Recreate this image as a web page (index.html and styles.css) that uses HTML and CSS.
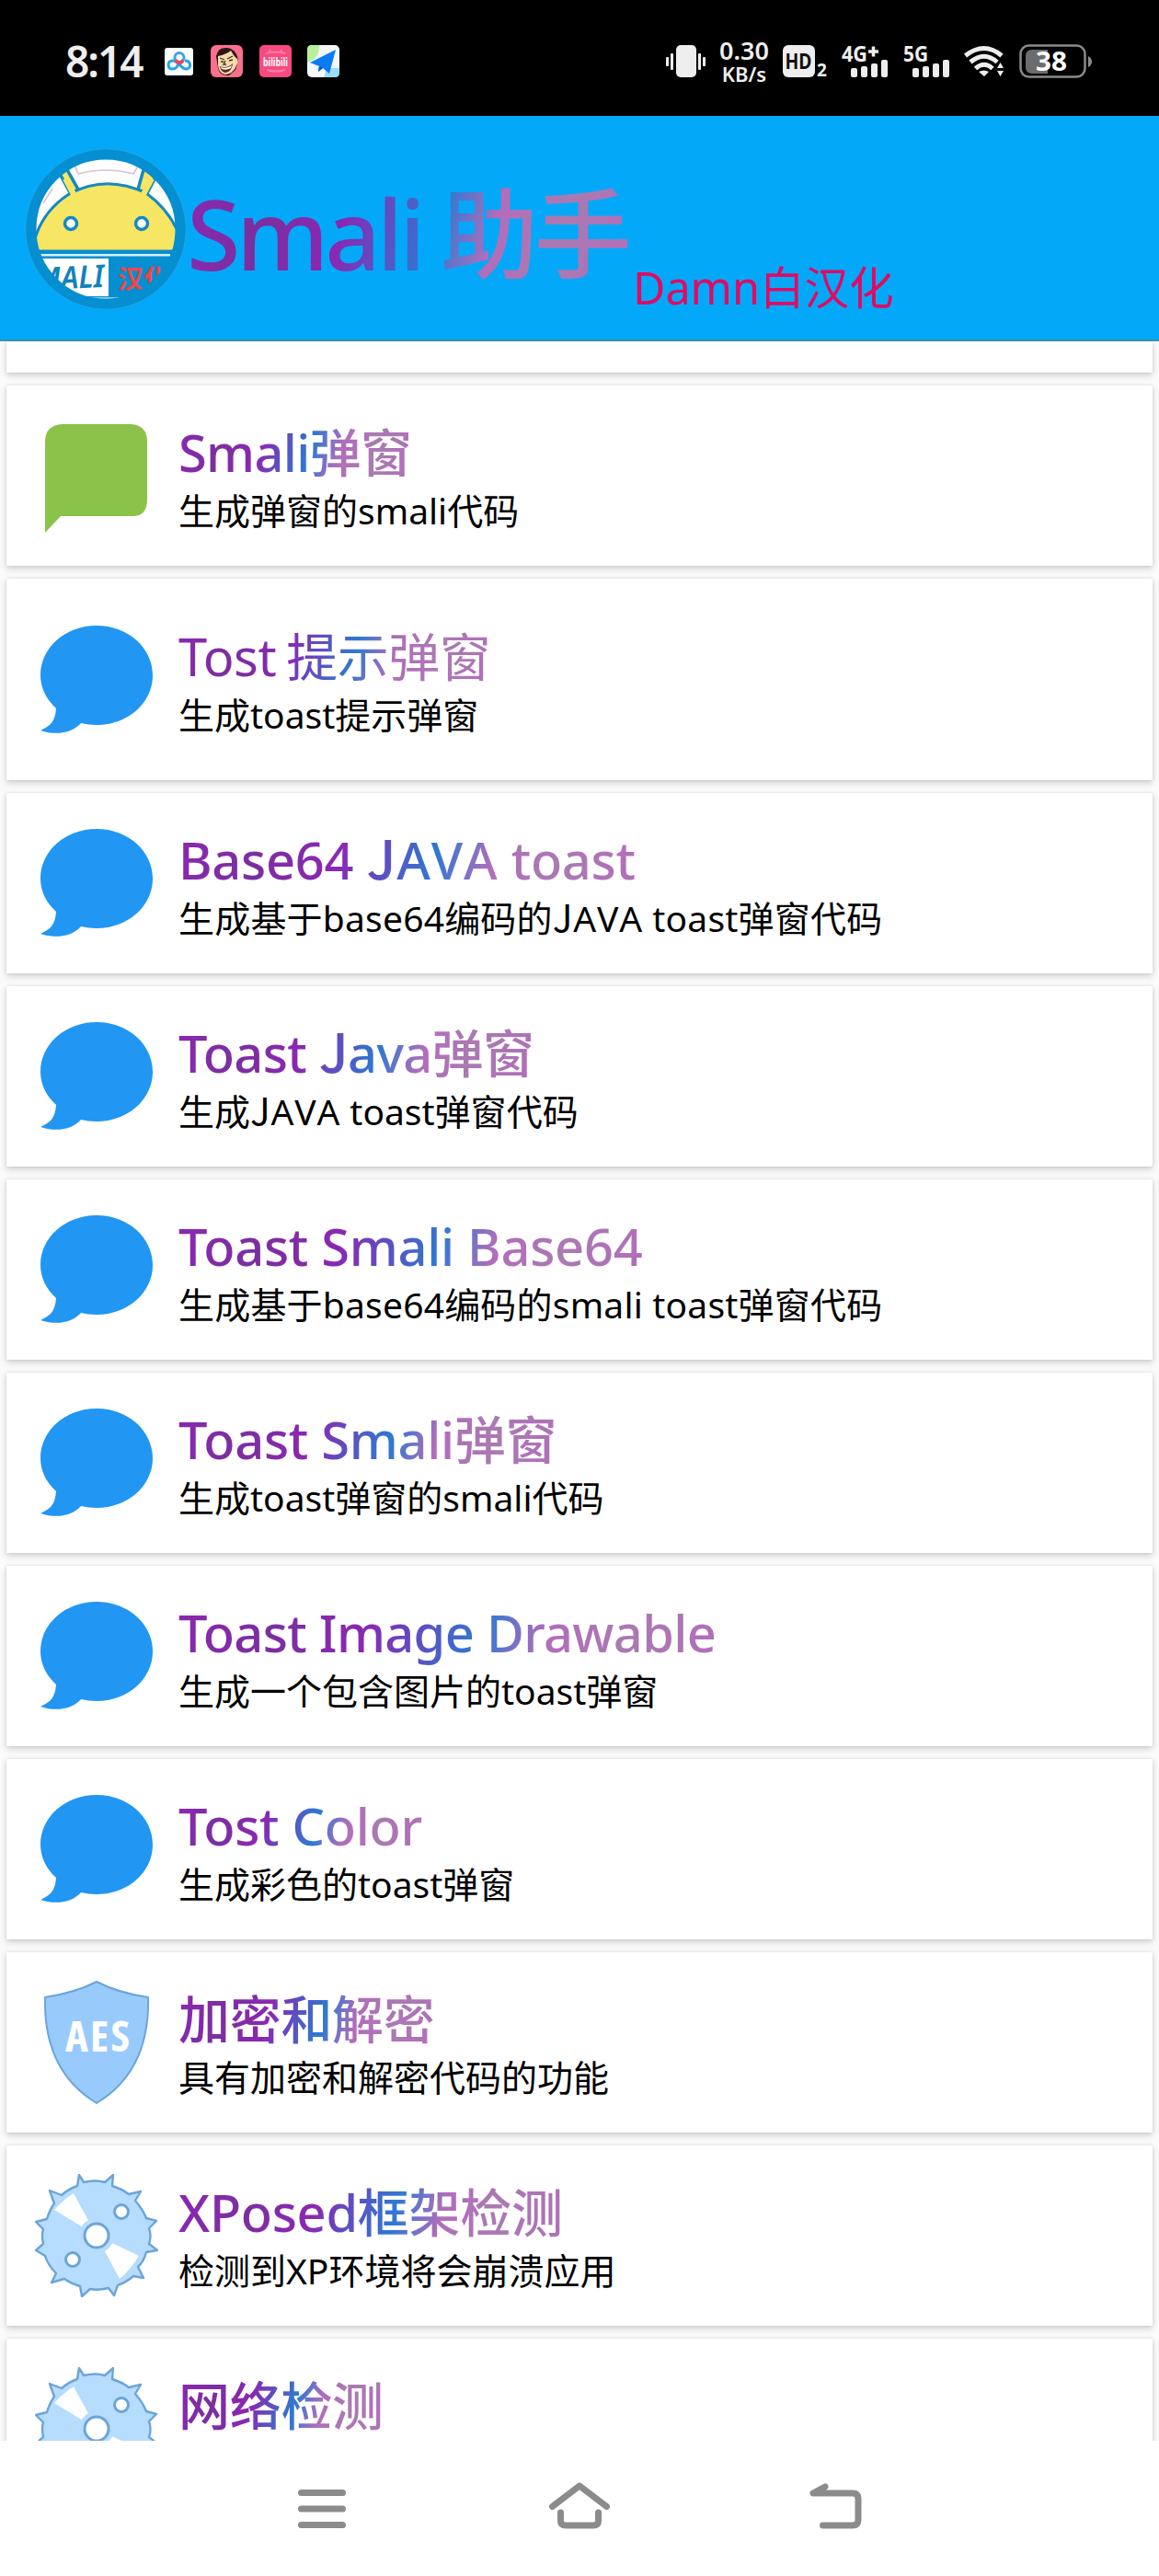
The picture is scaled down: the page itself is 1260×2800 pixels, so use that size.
FILE: index.html
```html
<!DOCTYPE html>
<html lang="zh-CN">
<head>
<meta charset="utf-8">
<title>Smali 助手</title>
<link rel="stylesheet" href="styles.css">
</head>
<body>
<svg class="defs" width="0" height="0">
  <defs>
    <symbol id="bubble" viewBox="0 0 124 120">
      <path fill="#2196f3" d="M62 1C96 1 123 25 123 55S96 109 62 109Q53 109 45 107C36 117 20 121 1 115C12 110 17 105 18 91C7 81 1 68 1 55C1 25 28 1 62 1Z"/>
    </symbol>
    <symbol id="saw" viewBox="0 0 134 134">
      <path fill="#b6dcfe" stroke="#6ba4d8" stroke-width="2.4" stroke-linejoin="round" d="M48 1L53 9Q66 6 76 9L85 1L84 13Q94 16 102 22L115 19L109 29Q117 38 121 48L132 51L124 59Q127 68 124 76L133 83L121 85Q118 96 112 101L118 113L107 111Q99 118 90 121L86 132L80 124Q68 127 60 125L51 133L49 122Q39 119 32 114L18 118L23 108Q14 99 11 89L1 83L9 76Q7 66 9 60L1 52L13 49Q16 39 21 32L16 18L29 23Q37 16 46 13Z"/>
      <path fill="#fff" d="M67 67L21 39Q31 28 42 21ZM67 67L113 89Q104 104 92 114Z"/>
      <circle cx="67" cy="67" r="19" fill="#b6dcfe"/>
      <g fill="#fff" stroke="#6ba4d8" stroke-width="3">
        <circle cx="67" cy="67" r="13"/><circle cx="94" cy="41" r="7.5"/><circle cx="41" cy="93" r="7.5"/>
      </g>
    </symbol>
  </defs>
</svg>

<header class="status">
  <div class="status-left">
    <time class="clock">8:14</time>
    <svg class="app app-cloud" viewBox="0 0 32 32">
      <rect y="1" width="31" height="30" rx="3" fill="#fff"/>
      <g fill="none" stroke-width="3"><path d="M16 15Q14 24 9 24Q4 24 4 19.500Q4 15 9 15Q12 15 16 19Q20 24 24 24Q28 23 27.500 19Q27 15 22 15" stroke="#25a6e4"/><circle cx="16" cy="11.500" r="5" stroke="#38a4e4"/></g>
      <path d="M12 14.500Q16 20 20 14.500" fill="none" stroke="#e8485c" stroke-width="4"/>
    </svg>
    <svg class="app app-face" viewBox="0 0 35 35">
      <rect width="35" height="35" rx="6" fill="#fb6f8f"/>
      <path d="M6 12Q8 2 18 3Q28 4 30 17L27 27L20 33Q10 34 8 25Z" fill="#2a1714"/>
      <path d="M8 12Q17 10 22 6Q25 12 29 15Q31 19 28 22Q25 31 16 32Q9 31 8 22Z" fill="#f8d9a8"/>
      <path d="M10 14l5 2M18 15l6-3M11 18h3M20 17l4-1M16 17l-2 4h3" stroke="#332" stroke-width="1.3" fill="none"/>
      <path d="M10 23Q18 26 24 20Q23 29 16 30Q11 29 10 23Z" fill="#5d2522"/>
      <path d="M11 24Q18 26 23 22L22 25Q17 28 12 26Z" fill="#fff"/>
    </svg>
    <svg class="app app-video" viewBox="0 0 35 35">
      <rect width="35" height="35" rx="5" fill="#f94a80"/>
      <path d="M7 9Q17 6 28 9M12 8l-1-3M23 8l1-3M8 27Q18 30 28 27" stroke="#fd82a8" stroke-width="2" fill="none"/>
      <text x="4" y="23" textLength="27" lengthAdjust="spacingAndGlyphs">bilibili</text>
    </svg>
    <svg class="app app-map" viewBox="0 0 35 35">
      <rect width="35" height="35" rx="5" fill="#f3f6fb"/>
      <path d="M5 0H13Q14 8 8 15L0 19V5Q0 0 5 0Z" fill="#b8ef9b"/><path d="M21 25H35V30Q35 35 30 35H18Z" fill="#9bdcfb"/>
      <path d="M31 5L3 19L13 23L12 29L17 25L24 31Z" fill="#0b7bf5"/><path d="M13 23L12 29L17 25Z" fill="#0758c0"/>
    </svg>
  </div>
  <div class="status-right">
    <svg class="vibrate" viewBox="0 0 44 36"><g fill="#eee"><rect x="11" width="22" height="35" rx="5"/><rect x="5" y="9" width="3" height="18" rx="1"/><rect y="13" width="3" height="10" rx="1"/><rect x="35" y="9" width="3" height="18" rx="1"/><rect x="40" y="13" width="3" height="10" rx="1"/></g></svg>
    <div class="speed"><span>0.30</span><span>KB/s</span></div>
    <svg class="hd" viewBox="0 0 50 36"><rect width="35" height="35" rx="6" fill="#eee"/><text x="2.500" y="26" class="hd-text" textLength="29" lengthAdjust="spacingAndGlyphs">HD</text><text x="37" y="34" class="hd-sub">2</text></svg>
    <svg class="signal" viewBox="0 0 52 36"><text x="0" y="18" class="net" textLength="28" lengthAdjust="spacingAndGlyphs">4G</text><path d="M29 7H40M34.500 1.500V12.500" stroke="#eee" stroke-width="3.500"/><g fill="#eee"><rect x="10" y="25" width="7" height="10" rx="2"/><rect x="21" y="23" width="7" height="12" rx="2"/><rect x="32" y="20" width="7" height="15" rx="2"/><rect x="43" y="16" width="7" height="19" rx="2"/></g></svg>
    <svg class="signal" viewBox="0 0 52 36"><text x="0" y="18" class="net" textLength="27" lengthAdjust="spacingAndGlyphs">5G</text><g fill="#eee"><rect x="10" y="25" width="7" height="10" rx="2"/><rect x="21" y="23" width="7" height="12" rx="2"/><rect x="32" y="20" width="7" height="15" rx="2"/><rect x="43" y="16" width="7" height="19" rx="2"/></g></svg>
    <svg class="wifi" viewBox="0 0 44 36"><g fill="none" stroke="#eee" stroke-width="5"><path d="M1.500 11.500Q22-4.500 41 11.500"/><path d="M7 18.500Q22 6 36 18.500"/><path d="M12.500 25.500Q22 17 31 25.500"/></g><path fill="#eee" d="M16 29Q22 26 27 29L22 34ZM36 25H43L39.500 19ZM36 28H43L39.500 34Z"/></svg>
    <svg class="battery" viewBox="0 0 80 38"><path d="M14 6H31V32H14Q7 32 7 25V13Q7 6 14 6Z" fill="#6c6c6c"/><rect x="1.500" y="1.500" width="70" height="34" rx="9" fill="none" stroke="#8a8a8a" stroke-width="2.500"/><path d="M75 13Q79 15 79 19T75 25Z" fill="#8a8a8a"/><text x="35" y="29" class="level" text-anchor="middle" textLength="34" lengthAdjust="spacingAndGlyphs">38</text></svg>
  </div>
</header>

<div class="appbar">
  <svg class="logo" viewBox="0 0 176 176">
    <defs><clipPath id="disc"><circle cx="88" cy="88" r="76.500"/></clipPath></defs>
    <circle cx="88" cy="88" r="87" fill="#058fd0" stroke="#2ba3da" stroke-width="1"/>
    <g clip-path="url(#disc)">
      <rect width="176" height="176" fill="#fff"/>
      <path d="M54 18L58 28Q88 20 118 28L124 18M20 60L30 44" fill="none" stroke="#d5c3d6" stroke-width="1.600"/>
      <path d="M37 26L50 50L58 45L44 20ZM130 20L123 45L133 49L145 26Z" fill="#f7e564" stroke="#1389c3" stroke-width="3.500"/>
      <path d="M8 112Q14 72 48 50Q88 28 132 49Q164 72 174 112Z" fill="#f7e564" stroke="#1389c3" stroke-width="3"/>
      <path d="M44 33L54 52M138 33L128 52" stroke="#f7e564" stroke-width="6"/>
      <circle cx="50" cy="82" r="6.500" fill="#fff" stroke="#1389c3" stroke-width="3.500"/>
      <circle cx="127" cy="82" r="6.500" fill="#fff" stroke="#1389c3" stroke-width="3.500"/>
      <rect y="112" width="176" height="64" fill="#058fd0"/>
      <rect y="115" x="12" width="146" height="2.500" fill="#d7f0fb"/>
      <rect y="120" width="91" height="41" fill="#fff"/>
      <rect x="40" y="162.500" width="62" height="2" fill="#fff"/>
      <text class="logo-en" x="-6" y="153" textLength="92" lengthAdjust="spacingAndGlyphs" transform="rotate(-3 44 140)">SMALI</text>
      <text class="logo-zh" x="101" y="153">汉化</text>
    </g>
    <circle cx="88" cy="88" r="81" fill="none" stroke="#058fd0" stroke-width="11"/>
  </svg>
  <h1 class="brand gradient">Smali 助手</h1>
  <span class="credit">Damn白汉化</span>
</div>

<main class="list">
  <article class="card card-cut"></article>
  <article class="card">
    <svg class="icon icon-green" viewBox="0 0 112 120"><path fill="#8bc34a" d="M19 0H93Q111 1 111 19V82Q111 100 95 100H17L0 118V19Q0 1 19 0Z"/></svg>
    <div class="text"><h2 class="gradient tight">Smali弹窗</h2><p>生成弹窗的smali代码</p></div>
  </article>
  <article class="card card-tall">
    <svg class="icon"><use href="#bubble"/></svg>
    <div class="text"><h2 class="gradient light">Tost 提示弹窗</h2><p>生成toast提示弹窗</p></div>
  </article>
  <article class="card">
    <svg class="icon"><use href="#bubble"/></svg>
    <div class="text"><h2 class="gradient">Base64 <span class="java"><span class="j">J</span>AVA</span> toast</h2><p class="wide">生成基于base64编码的<span class="java"><span class="j">J</span>AVA</span> toast弹窗代码</p></div>
  </article>
  <article class="card">
    <svg class="icon"><use href="#bubble"/></svg>
    <div class="text"><h2 class="gradient tight">Toast <span class="j">J</span>ava弹窗</h2><p>生成<span class="java"><span class="j">J</span>AVA</span> toast弹窗代码</p></div>
  </article>
  <article class="card">
    <svg class="icon"><use href="#bubble"/></svg>
    <div class="text"><h2 class="gradient">Toast Smali Base64</h2><p class="wide">生成基于base64编码的smali toast弹窗代码</p></div>
  </article>
  <article class="card">
    <svg class="icon"><use href="#bubble"/></svg>
    <div class="text"><h2 class="gradient">Toast Smali弹窗</h2><p>生成toast弹窗的smali代码</p></div>
  </article>
  <article class="card">
    <svg class="icon"><use href="#bubble"/></svg>
    <div class="text"><h2 class="gradient tight">Toast Image Drawable</h2><p>生成一个包含图片的toast弹窗</p></div>
  </article>
  <article class="card">
    <svg class="icon"><use href="#bubble"/></svg>
    <div class="text"><h2 class="gradient">Tost Color</h2><p>生成彩色的toast弹窗</p></div>
  </article>
  <article class="card">
    <svg class="icon icon-big" viewBox="0 0 134 134">
      <path d="M67 1Q90 13 123 18Q125 98 67 133Q9 98 11 18Q44 13 67 1Z" fill="#99cafc" stroke="#6aa5dc" stroke-width="2"/>
      <text class="aes" x="33" y="77" textLength="70">AES</text>
    </svg>
    <div class="text"><h2 class="gradient">加密和解密</h2><p>具有加密和解密代码的功能</p></div>
  </article>
  <article class="card">
    <svg class="icon icon-big"><use href="#saw"/></svg>
    <div class="text"><h2 class="gradient">XPosed框架检测</h2><p>检测到XP环境将会崩溃应用</p></div>
  </article>
  <article class="card">
    <svg class="icon icon-big"><use href="#saw"/></svg>
    <div class="text"><h2 class="gradient">网络检测</h2></div>
  </article>
</main>

<nav class="navbar">
  <svg viewBox="0 0 70 60"><path d="M12.500 12.500H57.500M12.500 30H57.500M12.500 47.500H57.500"/></svg>
  <svg viewBox="0 0 70 60"><path d="M5.500 27.500L35 5L64.500 27.500M14.500 34V43Q14.500 48 20 48H50Q55.500 48 55.500 43V34"/></svg>
  <svg viewBox="0 0 70 60"><path d="M22 6L9 13H52Q58 13 58 19V42Q58 48 52 48H19.500"/></svg>
</nav>
</body>
</html>
```

FILE: styles.css
```css
* { box-sizing: border-box; margin: 0; padding: 0; }
body {
  width: 1260px; height: 2800px; overflow: hidden;
  display: flex; flex-direction: column;
  background: #fff; color: #000;
  font-family: "Noto Sans", "Noto Sans CJK SC", sans-serif;
}
svg { display: block; flex: none; }
.defs { position: absolute; }

.status {
  height: 126px; flex: none; background: #000; color: #eee;
  display: flex; justify-content: space-between; align-items: center;
  padding: 7px 72px 0 71px;
}
.status svg { overflow: visible; }
.status-left, .status-right { display: flex; align-items: center; }
.clock { font-size: 46px; font-weight: 600; line-height: 64px; width: 108px; letter-spacing: -2px; margin-top: -2px; white-space: nowrap; }
.app { height: 35px; width: 35px; }
.app-cloud { width: 32px; height: 32px; }
.app-face { margin-left: 18px; }
.app-video { margin-left: 18px; }
.app-map { margin-left: 17px; }
.app-video text { font: bold 13px "Noto Sans", sans-serif; fill: #fff; }
.vibrate { width: 44px; height: 36px; }
.speed { margin-left: 13px; width: 56px; display: flex; flex-direction: column; align-items: center; font-size: 27px; font-weight: 600; line-height: 26px; }
.speed span + span { font-size: 22px; line-height: 24px; }
.hd { width: 50px; height: 36px; margin-left: 14px; }
.hd-text { font: bold 23px "Noto Sans", sans-serif; fill: #111; }
.hd-sub { font: bold 19px "Noto Sans", sans-serif; fill: #eee; }
.signal { width: 52px; height: 36px; margin-left: 15px; }
.hd + .signal { margin-left: 14px; }
.net { font: bold 24px "Noto Sans", sans-serif; fill: #eee; }
.wifi { width: 44px; height: 36px; margin-left: 14px; }
.battery { width: 80px; height: 38px; margin-left: 16px; }
.level { font: bold 29px "Noto Sans", sans-serif; fill: #fff; }

.appbar { height: 245px; flex: none; background: #03a9f8; display: flex; align-items: flex-start; padding: 35px 0 0 27px; border-bottom: 2px solid #378fb0; }
.logo { width: 176px; height: 176px; }
.logo-en { font: italic 600 34px "Noto Sans", sans-serif; fill: #1281bd; }
.logo-zh { font: bold 28px "Noto Sans CJK SC", sans-serif; fill: #f04545; }
.gradient {
  width: max-content; white-space: nowrap; color: transparent;
  background: linear-gradient(105deg, #8b27b2 0%, #7b2f9f 18%, #8b27b2 35%, #2e79d2 56%, #b26dbb 68%, #aa7ab2 82%, #b26dbb 100%);
  -webkit-background-clip: text; background-clip: text;
}
.brand { font-size: 106px; font-weight: 500; line-height: 130px; margin-top: 27px; width: 482px; letter-spacing: -4.2px; word-spacing: -3px; }
.credit { font-size: 48.500px; line-height: 60px; color: #e10a63; margin: 121px 0 0 3px; }

.list { height: 2282px; flex: none; overflow: hidden; background: #fafafa; display: flex; flex-direction: column; gap: 14px; padding: 0 7px; }
.card {
  height: 196px; flex: none; background: #fff; display: flex; align-items: flex-start;
  padding: 0 0 0 36px; box-shadow: 0 3px 7px rgba(0,0,0,.17), 0 0 3px rgba(0,0,0,.1);
}
.card-cut { height: 34px; }
.card-tall { height: 219px; padding-top: 12px; }
.icon { width: 124px; height: 120px; margin: 38px 27px 0 0; }
.icon-green { width: 112px; margin: 42px 33px 0 6px; }
.icon-big { width: 134px; height: 134px; margin: 31px 22px 0 -5px; }
.aes { font: bold 47px "Open Sans", sans-serif; font-stretch: 75%; fill: #fff; }
.text { padding-top: 38px; }
h2 { font-size: 56px; font-weight: 500; line-height: 68px; letter-spacing: -.3px; padding-bottom: 4px; }
.tight { letter-spacing: -.7px; }
.light { font-weight: 400; letter-spacing: -.5px; word-spacing: -3px; }
p { font-size: 39px; line-height: 54px; white-space: nowrap; margin-top: -1px; }
.wide { letter-spacing: .2px; }
.j { font-family: "Noto Sans CJK SC", sans-serif; font-size: 1.04em; line-height: 1; }
.java { font-kerning: none; letter-spacing: .8px; }

.navbar { flex: 1; display: flex; justify-content: center; gap: 210px; padding-top: 44px; }
.navbar svg { width: 70px; height: 60px; fill: none; stroke: #8b8b8b; stroke-width: 7; stroke-linecap: round; stroke-linejoin: round; }
```
